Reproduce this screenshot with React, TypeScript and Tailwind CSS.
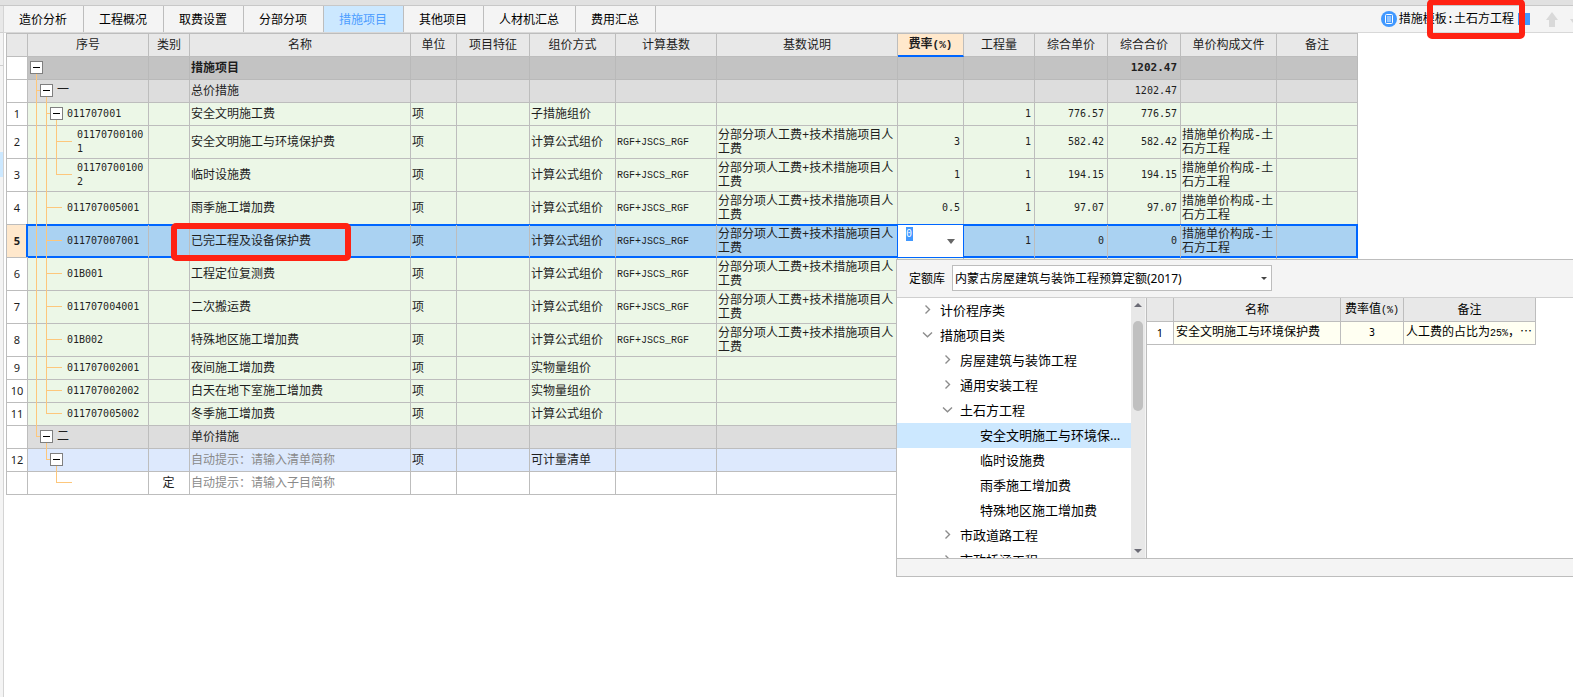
import { useState } from "react";
import clsx from "clsx";

type Guide = [number, "full" | "top" | "bottom"];

interface Row {
  no?: string;
  code?: string;
  kind?: string;
  name: string;
  unit?: string;
  method?: string;
  base?: string;
  desc?: string;
  rate?: string;
  qty?: string;
  price?: string;
  total?: string;
  file?: string;
  tone: "root" | "group" | "green" | "selected" | "blue" | "white";
  level: number;
  toggle?: boolean;
  guides: Guide[];
  stub?: [number, number];
}

const DESC = "分部分项人工费+技术措施项目人工费";
const FILE = "措施单价构成-土石方工程";
const FORMULA = "RGF+JSCS_RGF";

const tabs = [
  "造价分析",
  "工程概况",
  "取费设置",
  "分部分项",
  "措施项目",
  "其他项目",
  "人材机汇总",
  "费用汇总",
];

const columns = [
  { label: "", width: "w-[21px]" },
  { label: "序号", width: "w-[121px]" },
  { label: "类别", width: "w-[41px]" },
  { label: "名称", width: "w-[221px]" },
  { label: "单位", width: "w-[46px]" },
  { label: "项目特征", width: "w-[73px]" },
  { label: "组价方式", width: "w-[86px]" },
  { label: "计算基数", width: "w-[101px]" },
  { label: "基数说明", width: "w-[181px]" },
  { label: "费率", width: "w-[66px]" },
  { label: "工程量", width: "w-[71px]" },
  { label: "综合单价", width: "w-[73px]" },
  { label: "综合合价", width: "w-[73px]" },
  { label: "单价构成文件", width: "w-[96px]" },
  { label: "备注", width: "w-[81px]" },
];

const inner: Guide[] = [
  [8, "full"],
  [18, "full"],
];

const plainRow = {
  unit: "项",
  tone: "green" as const,
  level: 2,
  guides: inner,
  stub: [18, 34] as [number, number],
};

const formulaRow = {
  ...plainRow,
  method: "计算公式组价",
  base: FORMULA,
  desc: DESC,
};

const rows: Row[] = [
  { name: "措施项目", total: "1202.47", tone: "root", level: 0, toggle: true, guides: [[8, "bottom"]] },
  {
    code: "一",
    name: "总价措施",
    total: "1202.47",
    tone: "group",
    level: 1,
    toggle: true,
    guides: [[8, "full"], [18, "bottom"]],
    stub: [8, 18],
  },
  {
    no: "1",
    code: "011707001",
    name: "安全文明施工费",
    unit: "项",
    method: "子措施组价",
    qty: "1",
    price: "776.57",
    total: "776.57",
    tone: "green",
    level: 2,
    toggle: true,
    guides: [...inner, [28, "bottom"]],
    stub: [18, 28],
  },
  {
    ...formulaRow,
    no: "2",
    code: "011707001001",
    name: "安全文明施工与环境保护费",
    rate: "3",
    qty: "1",
    price: "582.42",
    total: "582.42",
    file: FILE,
    level: 3,
    guides: [...inner, [28, "full"]],
    stub: [28, 44],
  },
  {
    ...formulaRow,
    no: "3",
    code: "011707001002",
    name: "临时设施费",
    rate: "1",
    qty: "1",
    price: "194.15",
    total: "194.15",
    file: FILE,
    level: 3,
    guides: [...inner, [28, "top"]],
    stub: [28, 44],
  },
  {
    ...formulaRow,
    no: "4",
    code: "011707005001",
    name: "雨季施工增加费",
    rate: "0.5",
    qty: "1",
    price: "97.07",
    total: "97.07",
    file: FILE,
  },
  {
    ...formulaRow,
    no: "5",
    code: "011707007001",
    name: "已完工程及设备保护费",
    rate: "0",
    qty: "1",
    price: "0",
    total: "0",
    file: FILE,
    tone: "selected",
  },
  { ...formulaRow, no: "6", code: "01B001", name: "工程定位复测费" },
  { ...formulaRow, no: "7", code: "011707004001", name: "二次搬运费" },
  { ...formulaRow, no: "8", code: "01B002", name: "特殊地区施工增加费" },
  { ...plainRow, no: "9", code: "011707002001", name: "夜间施工增加费", method: "实物量组价" },
  { ...plainRow, no: "10", code: "011707002002", name: "白天在地下室施工增加费", method: "实物量组价" },
  {
    ...plainRow,
    no: "11",
    code: "011707005002",
    name: "冬季施工增加费",
    method: "计算公式组价",
    guides: [[8, "full"], [18, "top"]],
  },
  {
    code: "二",
    name: "单价措施",
    tone: "group",
    level: 1,
    toggle: true,
    guides: [[8, "top"], [18, "bottom"]],
    stub: [8, 18],
  },
  {
    no: "12",
    name: "自动提示：请输入清单简称",
    unit: "项",
    method: "可计量清单",
    tone: "blue",
    level: 2,
    toggle: true,
    guides: [[18, "top"], [28, "bottom"]],
    stub: [18, 28],
  },
  {
    kind: "定",
    name: "自动提示：请输入子目简称",
    tone: "white",
    level: 3,
    guides: [[28, "top"]],
    stub: [28, 44],
  },
];

const toneBg = {
  root: "bg-[#c3c3c3] border-[#b9b9b9]",
  group: "bg-[#dddddd] border-[#bdbdbd]",
  green: "bg-[#ecf7e7] border-[#bdbdbd]",
  selected: "bg-[#aad2f2] border-[#bdbdbd] border-b-[#0066ff]",
  blue: "bg-[#dde9fd] border-[#bdbdbd]",
  white: "bg-white border-[#bdbdbd]",
};

// the selection frame is drawn with shadows so it does not change the row height
const frame = "shadow-[0_-1px_0_#0066ff,inset_0_1px_0_#0066ff,inset_0_-1px_0_#0066ff]";
const frameStart =
  "shadow-[0_-1px_0_#0066ff,-2px_-1px_0_#0066ff,inset_0_1px_0_#0066ff,inset_0_-1px_0_#0066ff]";
const frameEnd =
  "border-r-[#0066ff] shadow-[0_-1px_0_#0066ff,inset_0_1px_0_#0066ff,inset_-1px_-1px_0_#0066ff]";

const togglePad = ["pl-[2px]", "pl-[12px]", "pl-[22px]"];
const leafPad = ["", "", "pl-[39px]", "pl-[49px]"];

const TreeLines = ({ guides, stub }: Pick<Row, "guides" | "stub">) => (
  <svg
    className="pointer-events-none absolute inset-0 h-full w-full overflow-visible"
    stroke="#fdc77c"
    shapeRendering="crispEdges"
    aria-hidden="true"
  >
    {guides.map(([x, part]) => (
      <line
        key={x}
        x1={x + 0.5}
        x2={x + 0.5}
        y1={part === "bottom" ? "50%" : "-1"}
        y2={part === "top" ? "50%" : "100%"}
      />
    ))}
    {stub && <line x1={stub[0]} x2={stub[1]} y1="49%" y2="49%" />}
  </svg>
);

const Toggle = () => (
  <button
    type="button"
    aria-label="−"
    className="relative flex size-[13px] shrink-0 items-center justify-center border border-[#7f7f7f] bg-white"
  >
    <span className="h-px w-[7px] bg-black" />
  </button>
);

const mono = "font-['DejaVu_Sans_Mono',monospace] text-[10px]";
const cell = "border-r border-b pt-[3px] pr-0.5 pb-px pl-px align-middle";
const num = clsx("border-r border-b py-0.5 pr-[3px] text-right align-middle", mono);

const MeasureRow = ({ row }: { row: Row }) => {
  const selected = row.tone === "selected";
  const bg = clsx(toneBg[row.tone], selected && frame);
  const hint = row.name.startsWith("自动提示");
  return (
    <tr className="h-[23px]">
      <th
        scope="row"
        className={clsx(
          "border-r border-b border-[#bdbdbd] font-['Noto_Sans',sans-serif] text-[11px]",
          selected ? "bg-[#ffe8cc] font-bold" : "bg-white font-normal"
        )}
      >
        {row.no}
      </th>
      <td
        className={clsx(
          "relative border-r border-b p-0 align-middle",
          toneBg[row.tone],
          selected && frameStart
        )}
      >
        <TreeLines guides={row.guides} stub={row.stub} />
        <div
          className={clsx(
            "flex items-center gap-1 pb-px",
            row.toggle ? togglePad[row.level] : leafPad[row.level]
          )}
        >
          {row.toggle && <Toggle />}
          <span className={clsx("break-all", row.level > 1 && mono)}>{row.code}</span>
        </div>
      </td>
      <td className={clsx(cell, bg, "text-center")}>{row.kind}</td>
      <td
        className={clsx(
          cell,
          bg,
          "relative",
          row.tone === "root" && "font-bold",
          hint && "text-[#8a8a8a]"
        )}
      >
        {row.name}
        {selected && (
          <span className="pointer-events-none absolute -top-0.5 -bottom-1 -left-[19px] z-10 w-[180px] rounded-[5px] border-6 border-[#ff2213]" />
        )}
      </td>
      <td className={clsx(cell, bg)}>{row.unit}</td>
      <td className={clsx(cell, bg)} />
      <td className={clsx(cell, bg)}>{row.method}</td>
      <td className={clsx(cell, bg, "text-[10px]")}>{row.base}</td>
      <td className={clsx(cell, bg)}>{row.desc}</td>
      {selected ? <RateEditor /> : <td className={clsx(num, bg)}>{row.rate}</td>}
      <td className={clsx(num, bg)}>{row.qty}</td>
      <td className={clsx(num, bg)}>{row.price}</td>
      <td className={clsx(num, bg)}>
        {row.tone === "root" ? (
          <b className="text-[11px]">{row.total}</b>
        ) : (
          row.total
        )}
      </td>
      <td className={clsx(cell, bg, "break-all")}>{row.file}</td>
      <td className={clsx(cell, toneBg[row.tone], selected && frameEnd)} />
    </tr>
  );
};

const RateEditor = () => (
  <td className="relative border-r border-b border-[#0066ff] bg-white p-0 align-top shadow-[0_-1px_0_#0066ff,-1px_0_0_#0066ff]">
    <div className="flex h-8 items-start justify-between pt-0.5 pr-1 pl-2">
      <input
        aria-label="费率(%)"
        defaultValue="0"
        className="h-[14px] w-[7px] bg-[#4098ff] font-['DejaVu_Sans_Mono',monospace] text-[10px] leading-[14px] text-white outline-none"
      />
      <button type="button" aria-label="▾" className="flex h-7 w-4 items-center justify-center">
        <svg width="8" height="5" viewBox="0 0 8 5" fill="#666">
          <path d="M0 0h8L4 5z" />
        </svg>
      </button>
    </div>
    <QuotaPopup />
  </td>
);

const treeNodes = [
  { label: "计价程序类", level: 0, state: "closed" },
  { label: "措施项目类", level: 0, state: "open" },
  { label: "房屋建筑与装饰工程", level: 1, state: "closed" },
  { label: "通用安装工程", level: 1, state: "closed" },
  { label: "土石方工程", level: 1, state: "open" },
  { label: "安全文明施工与环境保护费", level: 2, state: "leaf" },
  { label: "临时设施费", level: 2, state: "leaf" },
  { label: "雨季施工增加费", level: 2, state: "leaf" },
  { label: "特殊地区施工增加费", level: 2, state: "leaf" },
  { label: "市政道路工程", level: 1, state: "closed" },
  { label: "市政桥涵工程", level: 1, state: "closed" },
];

const nodePad = ["pl-[24px]", "pl-[44px]", "pl-[64px]"];

const Chevron = ({ state }: { state: string }) => (
  <svg width="13" height="13" viewBox="0 0 13 13" fill="none" stroke="#8c8c8c" strokeWidth="1.4" className="shrink-0">
    {state === "closed" && <path d="M4.5 2.5l4 4-4 4" />}
    {state === "open" && <path d="M2 4.5l4.5 4.2L11 4.5" />}
  </svg>
);

const QuotaPopup = () => {
  const [current, setCurrent] = useState("安全文明施工与环境保护费");
  const th = "border-r border-b border-[#bdbdbd] bg-[#e8e8e8] p-0 pt-0.5 font-normal";
  const td = "border-r border-b border-[#bdbdbd] px-0.5 py-0 whitespace-nowrap";

  return (
    <div className="absolute top-full -left-0.5 z-20 mt-0.5 w-[690px] border border-[#bdbdbd] bg-[#f4f4f4] text-black">
      <div className="flex items-center gap-[7px] border-b border-[#cfcfcf] pt-[5px] pb-1.5 pl-3 font-['Noto_Sans','Noto_Sans_CJK_SC',sans-serif]">
        <label htmlFor="quota" className="pt-0.5">
          定额库
        </label>
        <div className="relative">
          <select
            id="quota"
            className="h-[26px] w-[320px] appearance-none border border-[#bdbdbd] bg-white pt-0.5 pl-0.5 text-xs outline-none"
          >
            <option>内蒙古房屋建筑与装饰工程预算定额(2017)</option>
          </select>
          <svg
            className="pointer-events-none absolute top-3 right-[5px]"
            width="6"
            height="3"
            viewBox="0 0 6 3"
            fill="#444"
          >
            <path d="M0 0h6L3 3z" />
          </svg>
        </div>
      </div>
      <div className="flex h-[260px]">
        <ul className="w-[234px] overflow-hidden bg-white font-['Noto_Sans','Noto_Sans_CJK_SC',sans-serif] text-[13px] leading-5">
          {treeNodes.map(({ label, level, state }) => (
            <li key={label}>
              <button
                type="button"
                onClick={() => setCurrent(label)}
                className={clsx(
                  "flex h-[25px] w-full items-center gap-[6px] pr-[10px] pb-0.5 text-left",
                  nodePad[level],
                  label === current && "bg-[#cce8ff]"
                )}
              >
                <Chevron state={state} />
                <span className="truncate">{label}</span>
              </button>
            </li>
          ))}
        </ul>
        <div className="flex w-[14px] flex-col items-center bg-[#e8e8e8] py-[5px]">
          <svg width="8" height="4" viewBox="0 0 8 4" fill="#6b6b75">
            <path d="M0 4h8L4 0z" />
          </svg>
          <span className="mt-[14px] h-[90px] w-[10px] rounded-full bg-[#c0c0c0]" />
          <svg className="mt-auto" width="8" height="4" viewBox="0 0 8 4" fill="#6b6b75">
            <path d="M0 0h8L4 4z" />
          </svg>
        </div>
        <div className="ml-px flex-1 border-l border-[#bdbdbd] bg-white">
          <table className="w-[389px] table-fixed border-separate border-spacing-0">
            <thead>
              <tr className="h-[24px]">
                <th className={clsx(th, "w-[27px]")} />
                <th className={clsx(th, "w-[167px]")}>名称</th>
                <th className={clsx(th, "w-[63px]")}>
                  费率值<span className="text-[10px]">(%)</span>
                </th>
                <th className={clsx(th, "w-[132px]")}>备注</th>
              </tr>
            </thead>
            <tbody>
              <tr className="h-[23px]">
                <td className={clsx(td, "bg-white text-center font-['Noto_Sans',sans-serif] text-[11px]")}>1</td>
                <td className={clsx(td, "bg-[#fffff2]")}>安全文明施工与环境保护费</td>
                <td className={clsx(td, mono, "bg-[#fffff2] text-center")}>3</td>
                <td className={clsx(td, "bg-[#fffff2]")}>
                  人工费的占比为<span className="text-[10px]">25%</span>，⋯
                </td>
              </tr>
            </tbody>
          </table>
        </div>
      </div>
      <div className="h-[18px] border-t border-[#bdbdbd]" />
    </div>
  );
};

const TemplateBar = () => (
  <div className="relative -mr-[9px] ml-auto flex items-center font-['Liberation_Mono','Noto_Sans_CJK_SC',monospace]">
    <button type="button" className="flex items-center gap-0.5">
      <svg width="16" height="16" viewBox="0 0 16 16">
        <circle cx="8" cy="8" r="8" fill="#4098ff" />
        <rect x="4.5" y="3.5" width="7" height="9" rx="1" fill="none" stroke="#fff" />
        <path d="M6 6h4M6 8h4M6 10h4" stroke="#fff" strokeWidth=".9" />
      </svg>
      <span className="pt-0.5 whitespace-nowrap">措施模板:土石方工程</span>
    </button>
    <span className="ml-1 size-3 bg-[#4098ff]" />
    <button type="button" aria-label="↑" className="ml-4">
      <svg width="12" height="15" viewBox="0 0 12 15" fill="#d9d9d9">
        <path d="M6 0l6 8H9v7H3V8H0z" />
      </svg>
    </button>
    <button type="button" aria-label="↓" className="ml-3">
      <svg width="12" height="15" viewBox="0 0 12 15" fill="#d9d9d9">
        <path d="M6 15l6-8H9V0H3v7H0z" />
      </svg>
    </button>
    <span className="pointer-events-none absolute -top-[7px] left-[46px] z-10 h-[40px] w-[98px] rounded-[5px] border-6 border-[#ff2213]" />
  </div>
);

export default function App() {
  const [activeTab, setActiveTab] = useState("措施项目");

  return (
    <div className="flex min-h-screen flex-col overflow-hidden bg-white font-['Liberation_Mono','Noto_Sans_CJK_SC',monospace] text-xs leading-[14px] text-[#1e1e1e]">
      <div className="h-1.5 border-b border-[#c8c8c8] bg-[#e1e1e1]" />
      <div className="flex flex-1">
        <aside className="flex w-1 shrink-0 flex-col border-r border-[#d4d4d4] bg-[#f4f4f4]">
          <span className="h-[26px] bg-[#e8e8e8]" />
          <span className="h-[34px] border-y border-[#cfcfcf]" />
          <span className="mt-[86px] h-[25px] bg-[#cce8ff]" />
        </aside>
        <main className="min-w-0 flex-1">
          <nav className="flex h-[27px] items-stretch border-b border-[#d8d8d8] bg-[#f4f4f4] font-['Noto_Sans','Noto_Sans_CJK_SC',sans-serif] text-black">
            {tabs.map((tab) => (
              <button
                key={tab}
                type="button"
                onClick={() => setActiveTab(tab)}
                className={clsx(
                  "border-r border-[#bdbdbd] pt-0.5 pr-4 pl-[15px] whitespace-nowrap",
                  tab === activeTab && "bg-[#cce8ff] text-[#4b9dff]"
                )}
              >
                {tab}
              </button>
            ))}
            <TemplateBar />
          </nav>
          <div className="pl-0.5">
            <table className="w-[1352px] table-fixed border-separate border-spacing-0 border-t border-l border-[#bdbdbd]">
              <thead>
                <tr className="h-[23px]">
                  {columns.map(({ label, width }) => (
                    <th
                      key={label}
                      scope="col"
                      className={clsx(
                        "border-r border-[#bdbdbd] p-0",
                        width,
                        label === "费率"
                          ? "border-b-2 border-b-[#0066ff] bg-[#ffe8cc] font-bold"
                          : "border-b bg-[#e8e8e8] pt-0.5 font-normal"
                      )}
                    >
                      {label}
                      {label === "费率" && <span className="text-[11px]">(%)</span>}
                    </th>
                  ))}
                </tr>
              </thead>
              <tbody>
                {rows.map((row) => (
                  <MeasureRow key={row.name} row={row} />
                ))}
              </tbody>
            </table>
          </div>
        </main>
      </div>
    </div>
  );
}
